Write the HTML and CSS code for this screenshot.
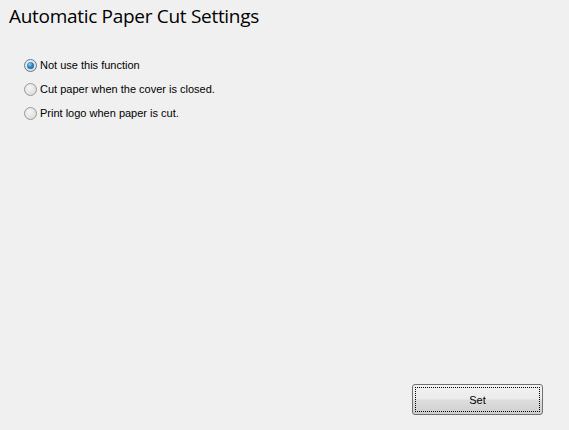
FILE: index.html
```html
<!DOCTYPE html>
<html>
<head>
<meta charset="utf-8">
<link rel="stylesheet" href="styles.css">
</head>
<body>
<div class="page">
  <h1 class="title">Automatic Paper Cut Settings</h1>
  <div class="options">
    <label class="opt"><span class="radio checked"><span class="dot"></span></span>Not use this function</label>
    <label class="opt"><span class="radio"></span>Cut paper when the cover is closed.</label>
    <label class="opt"><span class="radio"></span>Print logo when paper is cut.</label>
  </div>
  <div class="spacer"></div>
  <div class="footer">
    <button class="btn"><span class="focus">Set</span></button>
  </div>
</div>
</body>
</html>
```
FILE: styles.css
```css
html, body { margin: 0; padding: 0; }
body {
  background: #f0f0f0;
  width: 569px;
  height: 430px;
  overflow: hidden;
  font-family: "Liberation Sans", Arial, sans-serif;
  color: #000;
}
.page {
  height: 430px;
  display: flex;
  flex-direction: column;
  box-sizing: border-box;
  padding: 0 26px 15px 9px;
}
.title {
  margin: 3px 0 0 0;
  font-family: "Open Sans", "Noto Sans", sans-serif;
  font-weight: 400;
  font-size: 19px;
  line-height: 26px;
  letter-spacing: -0.3px;
  color: #000;
}
.options {
  margin-top: 29px;
  padding-left: 15px;
  display: flex;
  flex-direction: column;
  gap: 10px;
}
.opt {
  display: flex;
  align-items: center;
  height: 14px;
  font-size: 11px;
  line-height: 14px;
  color: #000;
}
.radio {
  width: 11px;
  height: 11px;
  border-radius: 50%;
  border: 1px solid #9a9a9a;
  background: radial-gradient(circle at 40% 35%, #f6f6f6 0%, #e2e2e2 60%, #cfcfcf 100%);
  margin-right: 3px;
  display: flex;
  align-items: center;
  justify-content: center;
  flex: none;
}
.radio.checked { border-color: #5f7a96; }
.dot {
  width: 7px;
  height: 7px;
  border-radius: 50%;
  background: radial-gradient(circle at 40% 35%, #8fd4f4 0%, #2a86bd 45%, #0f4f86 100%);
}
.spacer { flex: 1; }
.footer {
  display: flex;
  justify-content: flex-end;
}
.btn {
  width: 131px;
  height: 31px;
  box-sizing: border-box;
  border: 1px solid #707070;
  border-radius: 3px;
  background: linear-gradient(#f2f2f2 0%, #ebebeb 48%, #dddddd 52%, #cfcfcf 100%);
  padding: 2px;
  font-family: "Liberation Sans", Arial, sans-serif;
  font-size: 11px;
  color: #000;
  display: flex;
}
.focus {
  flex: 1;
  border: 1px dotted #000;
  display: flex;
  align-items: center;
  justify-content: center;
}
```
